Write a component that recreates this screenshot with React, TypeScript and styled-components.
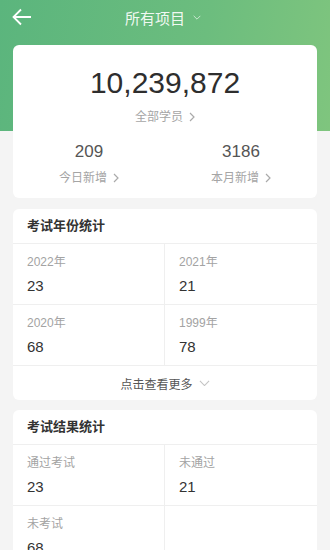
import React from 'react';
import styled, { createGlobalStyle } from 'styled-components';

const GlobalStyle = createGlobalStyle`
    * { box-sizing: border-box; }
    body {
        margin: 0;
        font-family: 'Liberation Sans', 'Noto Sans CJK SC', sans-serif;
        background: #f4f4f4;
    }
`;

const Page = styled.div`
    min-height: 550px;
    padding: 0 13px 20px;
    background: linear-gradient(100deg, #5bb57d 0%, #6cbd7e 60%, #7fc57e 100%) top / 100% 131px no-repeat, #f4f4f4;
`;

const NavBar = styled.div`
    position: relative;
    height: 34px;
    display: flex;
    align-items: center;
    justify-content: center;
    margin-bottom: 11px;
`;

const BackButton = styled.button`
    position: absolute;
    left: -1px;
    top: 8px;
    border: 0;
    background: none;
    padding: 0;
    display: flex;
`;

const NavTitle = styled.div`
    display: flex;
    align-items: center;
    gap: 8px;
    color: rgba(255, 255, 255, 0.92);
    font-size: 15px;
    margin-left: -4px;
`;

const Card = styled.div`
    background: #fff;
    border-radius: 6px;
    margin-bottom: 10px;
    overflow: hidden;
`;

const Summary = styled(Card)`
    padding: 20px 0 11px;
    margin-bottom: 11px;
    text-align: center;
`;

const BigNumber = styled.div`
    font-size: 30px;
    line-height: 36px;
    color: #2e2e2e;
`;

const LinkLabel = styled.div<{ $top: number }>`
    display: flex;
    align-items: center;
    justify-content: center;
    gap: 6px;
    margin-top: ${p => p.$top}px;
    font-size: 12px;
    line-height: 18px;
    color: #a5a5a5;
`;

const SubRow = styled.div`
    display: grid;
    grid-template-columns: 1fr 1fr;
    margin-top: 15px;
`;

const SubNumber = styled.div`
    font-size: 17px;
    line-height: 22px;
    color: #555;
`;

const CardHeader = styled.div`
    height: 35px;
    padding: 0 0 3px 14px;
    display: flex;
    align-items: center;
    font-size: 13px;
    font-weight: bold;
    color: #333;
    border-bottom: 1px solid #efefef;
`;

const Grid = styled.div`
    display: grid;
    grid-template-columns: 1fr 1fr;
`;

const Cell = styled.div`
    height: 61px;
    padding: 10px 13px 0 14px;
    border-bottom: 1px solid #efefef;
    &:nth-child(odd) {
        border-right: 1px solid #efefef;
    }
`;

const CellLabel = styled.div`
    font-size: 12px;
    line-height: 16px;
    color: #a3a3a3;
`;

const CellValue = styled.div`
    margin-top: 7px;
    font-size: 15px;
    line-height: 18px;
    color: #333;
`;

const MoreRow = styled.div`
    height: 34px;
    display: flex;
    align-items: center;
    justify-content: center;
    gap: 6px;
    font-size: 12px;
    color: #555;
`;

const Chevron = ({ color = '#aaa' }: { color?: string }) => (
    <svg width="6" height="10" viewBox="0 0 6 10">
        <polyline points="1,1 5,5 1,9" fill="none" stroke={color} strokeWidth="1.2" />
    </svg>
);

const ChevronDown = ({ color = '#c4c4c4', w = 11 }: { color?: string; w?: number }) => (
    <svg width={w} height={w / 2 + 1} viewBox="0 0 12 7">
        <polyline points="1,1 6,6 11,1" fill="none" stroke={color} strokeWidth="1.2" />
    </svg>
);

type Stat = { label: string; value: string };

const yearStats: Stat[] = [
    { label: '2022年', value: '23' },
    { label: '2021年', value: '21' },
    { label: '2020年', value: '68' },
    { label: '1999年', value: '78' }
];

const resultStats: Stat[] = [
    { label: '通过考试', value: '23' },
    { label: '未通过', value: '21' },
    { label: '未考试', value: '68' },
    { label: '', value: '' }
];

const StatGrid = ({ items }: { items: Stat[] }) => (
    <Grid>
        {items.map((s, i) => (
            <Cell key={i}>
                <CellLabel>{s.label}</CellLabel>
                <CellValue>{s.value}</CellValue>
            </Cell>
        ))}
    </Grid>
);

const App = () => {
    return (
        <Page>
            <GlobalStyle />
            <NavBar>
                <BackButton>
                    <svg width="20" height="18" viewBox="0 0 20 18">
                        <path d="M19 9H2M9 1.5L1.5 9L9 16.5" fill="none" stroke="#fff" strokeWidth="1.8" />
                    </svg>
                </BackButton>
                <NavTitle>
                    所有项目
                    <ChevronDown color="rgba(255,255,255,0.8)" w={8} />
                </NavTitle>
            </NavBar>

            <Summary>
                <BigNumber>10,239,872</BigNumber>
                <LinkLabel $top={7}>
                    全部学员 <Chevron />
                </LinkLabel>
                <SubRow>
                    <div>
                        <SubNumber>209</SubNumber>
                        <LinkLabel $top={6}>
                            今日新增 <Chevron />
                        </LinkLabel>
                    </div>
                    <div>
                        <SubNumber>3186</SubNumber>
                        <LinkLabel $top={6}>
                            本月新增 <Chevron />
                        </LinkLabel>
                    </div>
                </SubRow>
            </Summary>

            <Card>
                <CardHeader>考试年份统计</CardHeader>
                <StatGrid items={yearStats} />
                <MoreRow>
                    点击查看更多 <ChevronDown />
                </MoreRow>
            </Card>

            <Card>
                <CardHeader>考试结果统计</CardHeader>
                <StatGrid items={resultStats} />
            </Card>
        </Page>
    );
};

export default App;
